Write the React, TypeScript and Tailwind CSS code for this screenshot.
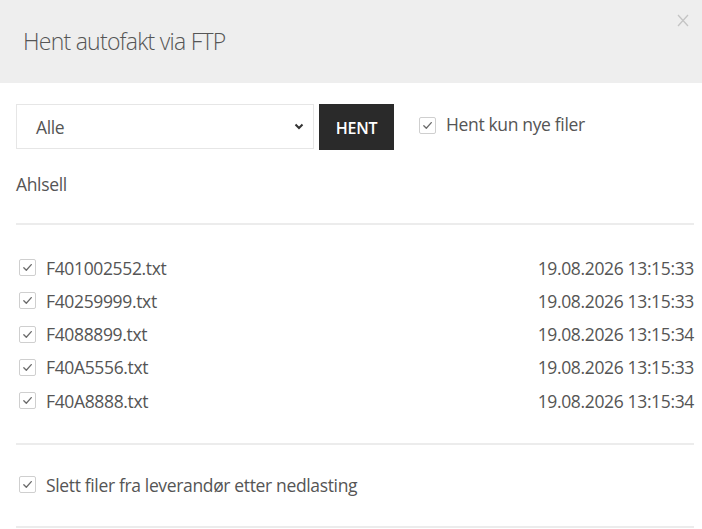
import React from "react";

const files = [
  { name: "F401002552.txt", date: "19.08.2026 13:15:33" },
  { name: "F40259999.txt", date: "19.08.2026 13:15:33" },
  { name: "F4088899.txt", date: "19.08.2026 13:15:34" },
  { name: "F40A5556.txt", date: "19.08.2026 13:15:33" },
  { name: "F40A8888.txt", date: "19.08.2026 13:15:34" },
];

function Check() {
  return (
    <span className="flex h-[17px] w-[17px] shrink-0 items-center justify-center rounded-[2px] border border-[#cfcfcf] bg-white">
      <svg width="11" height="11" viewBox="0 0 11 11" fill="none">
        <path d="M1.8 5.8 L4.3 8.3 L9.3 2.6" stroke="#6b6b6b" strokeWidth="1.3" strokeLinecap="round" strokeLinejoin="round" />
      </svg>
    </span>
  );
}

export default function App() {
  return (
    <div className="h-[529px] w-full overflow-hidden bg-white text-[#555] [font-family:'Open_Sans','Noto_Sans',sans-serif]">
      <div className="relative h-[83px] bg-[#eeeeee] pl-[23px] pt-[25px]">
        <h1 className="text-[23px] font-light leading-[32px] tracking-[-0.75px] text-[#555]">Hent autofakt via FTP</h1>
        <svg className="absolute right-[13px] top-[14px]" width="12" height="13" viewBox="0 0 12 13" fill="none">
          <path d="M1 1 L11 12 M11 1 L1 12" stroke="#c4c4c4" strokeWidth="1.3" />
        </svg>
      </div>
      <div className="pl-[16px] pr-[8px] text-[17.5px] tracking-[-0.35px]">
        <div className="mt-[21px] flex items-start">
          <div className="flex h-[45px] w-[298px] items-center justify-between border border-[#e6e6e6] pl-[19px] pr-[9px]">
            <span className="leading-[24px]">Alle</span>
            <svg width="10" height="7" viewBox="0 0 10 7" fill="none">
              <path d="M1.5 1.5 L5 5 L8.5 1.5" stroke="#333" strokeWidth="2" />
            </svg>
          </div>
          <button className="ml-[5px] flex h-[46px] w-[75px] items-center justify-center bg-[#2a2a2a] pt-[1px] text-[16px] font-semibold leading-[24px] tracking-[-0.3px] text-white">
            HENT
          </button>
          <label className="ml-[25px] mt-[8px] flex items-center gap-[10px]">
            <span className="mt-[3px]">
              <Check />
            </span>
            <span className="leading-[24px]">Hent kun nye filer</span>
          </label>
        </div>
        <div className="mt-[22px] leading-[24px]">Ahlsell</div>
        <div className="mt-[27px] h-[2px] bg-[#ececec]" />
        <div className="mt-[26px]">
          {files.map((f) => (
            <div key={f.name} className="flex h-[33.25px] items-center justify-between pl-[3px]">
              <div className="flex items-center gap-[10px]">
                <Check />
                <span className="leading-[24px]">{f.name}</span>
              </div>
              <span className="leading-[24px]">{f.date}</span>
            </div>
          ))}
        </div>
        <div className="mt-[26px] h-[2px] bg-[#ececec]" />
        <div className="mt-[23px] flex h-[33px] items-center gap-[10px] pl-[3px]">
          <Check />
          <span className="leading-[24px]">Slett filer fra leverandør etter nedlasting</span>
        </div>
        <div className="mt-[25px] h-[2px] bg-[#ececec]" />
      </div>
    </div>
  );
}
